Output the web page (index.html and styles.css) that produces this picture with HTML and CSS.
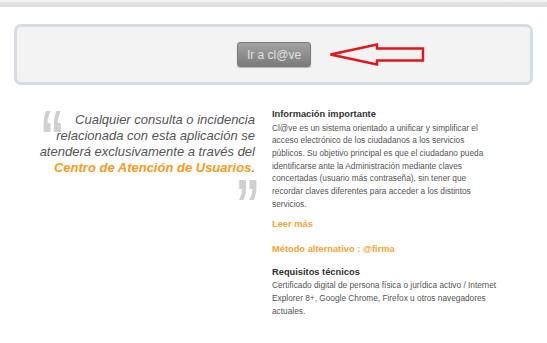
FILE: index.html
```html
<!DOCTYPE html>
<html lang="es">
<head>
<meta charset="UTF-8">
<title>Cl@ve</title>
<link rel="stylesheet" href="styles.css">
</head>
<body>
<div class="top-bar"></div>
<div class="page">
    <div class="access-box">
        <button class="btn-clave">Ir a cl@ve</button>
        <svg class="arrow" width="96" height="24" viewBox="0 0 96 24">
            <path d="M1.5 11.5 L48 1.5 L48 5.5 L94 5.5 L94 17.5 L48 17.5 L48 21.5 Z" fill="none" stroke="#e8141c" stroke-width="2.4" stroke-linejoin="miter"/>
        </svg>
    </div>
    <div class="info">
        <div class="quote">
            <span class="q-open">&ldquo;</span>
            <p>Cualquier consulta o incidencia relacionada con esta aplicación se atenderá exclusivamente a través del <a href="#">Centro de Atención de Usuarios</a>.</p>
            <span class="q-close">&rdquo;</span>
        </div>
        <div class="details">
            <h3>Información importante</h3>
            <p>Cl@ve es un sistema orientado a unificar y simplificar el acceso electrónico de los ciudadanos a los servicios públicos. Su objetivo principal es que el ciudadano pueda identificarse ante la Administración mediante claves concertadas (usuario más contraseña), sin tener que recordar claves diferentes para acceder a los distintos servicios.</p>
            <a class="link" href="#">Leer más</a>
            <a class="link" href="#">Método alternativo : @firma</a>
            <h3>Requisitos técnicos</h3>
            <p>Certificado digital de persona física o jurídica activo / Internet Explorer 8+, Google Chrome, Firefox u otros navegadores actuales.</p>
        </div>
    </div>
</div>
</body>
</html>
```

FILE: styles.css
```css
body {
    margin: 0;
    font-family: "Liberation Sans", Arial, sans-serif;
    background-color: #fff;
    color: #333;
}
.top-bar {
    height: 7px;
    border-top: 2px solid #f4f4f4;
    box-sizing: border-box;
    background: linear-gradient(#e4e4e4, #dcdcdc);
}
.page {
    padding: 17px 14px 0 14px;
}
.access-box {
    height: 55px;
    border: 3px solid #d5dce2;
    border-radius: 7px;
    background-color: #f3f3f3;
    display: flex;
    align-items: center;
    padding-left: 220px;
}
.btn-clave {
    width: 74px;
    height: 25px;
    border: 1px solid #7a7a7a;
    border-radius: 3px;
    background: linear-gradient(#a3a3a3, #7a7a7a);
    color: #e0e0e0;
    font-family: "Liberation Sans", Arial, sans-serif;
    font-size: 12px;
    padding: 0;
    box-shadow: 0 1px 1px rgba(0, 0, 0, 0.25);
}
.arrow {
    margin-left: 18px;
}
.info {
    display: flex;
    padding-top: 25px;
}
.quote {
    width: 220px;
    margin-left: 21px;
    position: relative;
}
.quote p {
    margin: 2px 0 0;
    font-size: 13px;
    font-style: italic;
    line-height: 16px;
    color: #555;
    text-align: right;
}
.quote a {
    color: #f99c1c;
    font-weight: bold;
    text-decoration: none;
}
.q-open, .q-close {
    position: absolute;
    font-family: "Liberation Sans", Arial, sans-serif;
    font-weight: bold;
    font-size: 70px;
    line-height: 1;
    color: #d0d0d0;
}
.q-open {
    left: 5px;
    top: -9px;
    transform: scaleX(0.7);
    transform-origin: left top;
}
.q-close {
    right: -5px;
    top: 60px;
    transform: scaleX(0.7);
    transform-origin: right top;
}
.details {
    margin-left: 17px;
    width: 226px;
    font-size: 8.3px;
}
.details h3 {
    margin: 0;
    font-size: 9.3px;
    font-weight: bold;
    color: #333;
    line-height: 8px;
}
.details p {
    margin: 3.5px 0 7.5px;
    line-height: 12.7px;
    color: #555;
}
.link {
    display: block;
    color: #f9a334;
    font-weight: bold;
    font-size: 9.3px;
    line-height: 12px;
    text-decoration: none;
    margin-bottom: 13px;
}
.link + h3 {
    margin-top: 4px;
}
```
